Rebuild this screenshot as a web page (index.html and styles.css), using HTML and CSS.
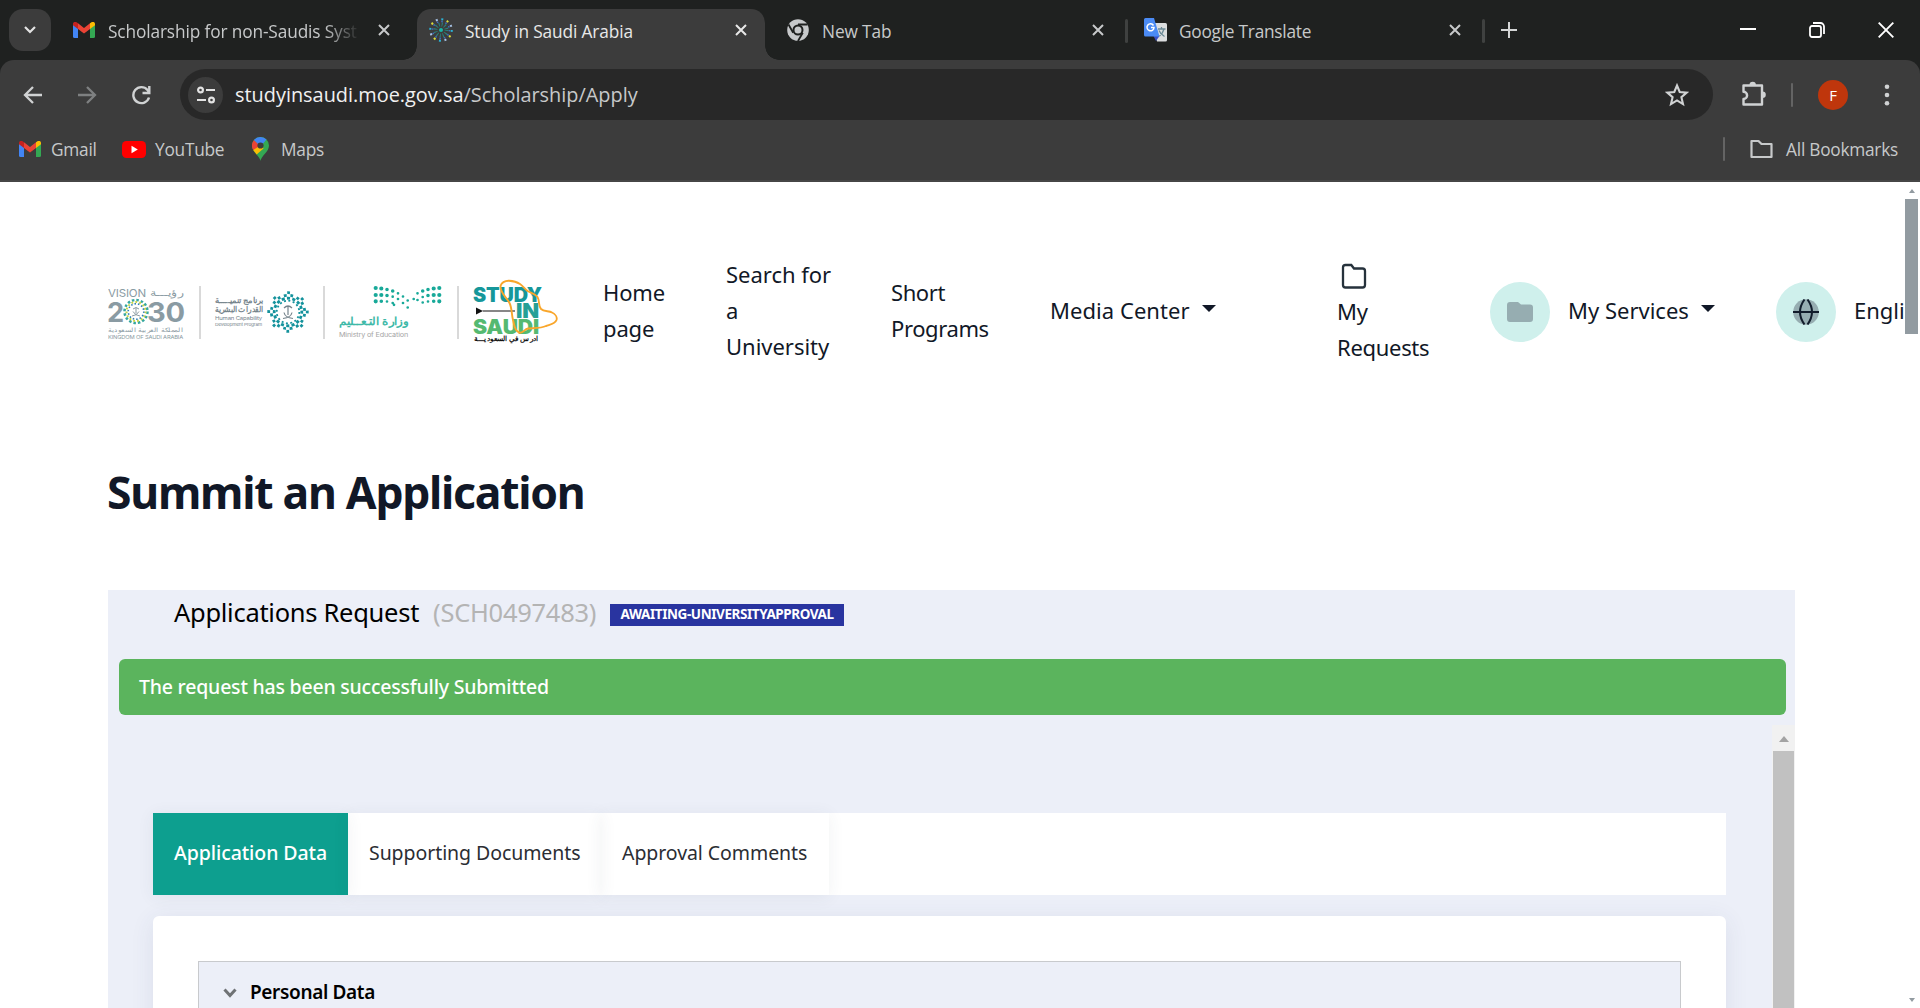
FILE: index.html
```html
<!DOCTYPE html>
<html lang="en">
<head>
<meta charset="utf-8">
<title>Study in Saudi Arabia</title>
<link rel="stylesheet" href="styles.css">
</head>
<body>
<svg width="0" height="0" class="defs">
  <defs>
    <symbol id="gmail" viewBox="0 0 22 16">
      <path fill="#4285f4" d="M0 2.5V14.500a1.500 1.500 0 0 0 1.500 1.500H5V6z"/>
      <path fill="#34a853" d="M22 2.500V14.500a1.500 1.500 0 0 1-1.500 1.500H17V6z"/>
      <path fill="#fbbc04" d="M17 1.200V7l5-3.700V2c0-2-2.200-2.700-3.600-1.700z"/>
      <path fill="#c5221f" d="M5 1.200V7L0 3.300V2C0 0 2.200-.7 3.600.3z"/>
      <path fill="#ea4335" d="M5 7V1.300l6 4.600 6-4.600V7l-6 4.600z"/>
    </symbol>
    <symbol id="close" viewBox="0 0 12 12"><path d="M1 1l10 10M11 1L1 11" stroke="currentColor" stroke-width="2" fill="none"/></symbol>
    <symbol id="folder" viewBox="0 0 24 20"><path d="M2 2h7l3 3h10v13H2z" fill="none" stroke="currentColor" stroke-width="2.200" stroke-linejoin="round"/></symbol>
  </defs>
</svg>

<div class="chrome">
  <div class="tabstrip">
    <div class="tab-search"><svg width="12" height="8" viewBox="0 0 12 8"><path d="M1 1l5 5 5-5" fill="none" stroke="#e3e3e3" stroke-width="2.200"/></svg></div>
    <div class="tab tab-mail"><svg class="fav" width="22" height="16"><use href="#gmail"/></svg><span class="tab-title fade">Scholarship for non-Saudis Syst</span><svg class="x" width="12" height="12"><use href="#close"/></svg></div>
    <div class="tab tab-active">
      <svg class="fav" width="24" height="24" viewBox="-12 -12 24 24" fill="none">
        <circle r="2" fill="#18b5a4"/>
        <circle r="5.500" stroke="#2a7f7a" stroke-width="4" stroke-dasharray="1 1.880"/>
        <circle r="8.500" stroke="#3f6fc0" stroke-width="1.600" stroke-dasharray="1.500 2.950"/>
        <circle r="10.800" stroke="#2bb3d6" stroke-width="2" stroke-dasharray="2 14.960"/>
        <circle r="10.800" stroke="#d9dc3c" stroke-width="2" stroke-dasharray="2 14.960" stroke-dashoffset="-5.650"/>
        <circle r="10.800" stroke="#a9c5e8" stroke-width="2" stroke-dasharray="2 14.960" stroke-dashoffset="-11.300"/>
      </svg>
      <span class="tab-title">Study in Saudi Arabia</span><svg class="x" width="12" height="12"><use href="#close"/></svg>
    </div>
    <div class="tab tab-new">
      <svg class="fav" width="22" height="22" viewBox="-11 -11 22 22"><circle r="10.800" fill="#c7c9cb"/><circle r="4.500" fill="#c7c9cb" stroke="#1f2120" stroke-width="2"/><path d="M0-5.500H9.500M4.800 2.700L0 11M-4.800 2.700L-9.500-5.500" stroke="#1f2120" stroke-width="1.800"/></svg>
      <span class="tab-title">New Tab</span><svg class="x" width="12" height="12"><use href="#close"/></svg>
    </div>
    <div class="tab tab-translate">
      <svg class="fav" width="23" height="24" viewBox="0 0 23 24"><path fill="#dcdedf" d="M9 5h12.500a1.500 1.500 0 0 1 1.500 1.500V22a1.500 1.500 0 0 1-1.500 1.500H13z"/><path fill="#3b50c5" d="M9.500 18h6L12 23z"/><path fill="#4b8bf5" d="M1.500 0H10l5.500 18.500h-14A1.500 1.500 0 0 1 0 17V1.500A1.500 1.500 0 0 1 1.500 0z"/><path d="M9.500 7.500A3.500 3.500 0 1 0 10 9.500H7" fill="none" stroke="#fff" stroke-width="1.500"/><path d="M14 11h7.500M17.500 9v2M20 11c-.8 3-2.500 5.500-4.500 7M15 12.500c1 2.500 3 4.500 5.500 6" fill="none" stroke="#6b8a96" stroke-width="1.300"/></svg>
      <span class="tab-title">Google Translate</span><svg class="x" width="12" height="12"><use href="#close"/></svg>
    </div>
    <div class="window-area">
      <svg width="16" height="16" viewBox="0 0 16 16"><path d="M8 0v16M0 8h16" stroke="#d4d6d6" stroke-width="2"/></svg>
      <div class="window-buttons">
        <svg width="16" height="16" viewBox="0 0 16 16"><path d="M0 7h16" stroke="#fff" stroke-width="2"/></svg>
        <svg width="16" height="16" viewBox="0 0 16 16"><rect x="1" y="4" width="11" height="11" rx="2" fill="none" stroke="#fff" stroke-width="1.800"/><path d="M4 1h7.500A3.500 3.500 0 0 1 15 4.500V12" fill="none" stroke="#fff" stroke-width="1.800"/></svg>
        <svg width="16" height="16" viewBox="0 0 16 16"><path d="M.7.700l14.600 14.600M15.300.7L.7 15.300" stroke="#fff" stroke-width="1.900"/></svg>
      </div>
    </div>
  </div>

  <div class="toolbar">
    <div class="nav-buttons">
      <svg width="20" height="20" viewBox="0 0 20 20"><path d="M19 10H2.500M10 2l-8 8 8 8" fill="none" stroke="#d0d2d3" stroke-width="2.300"/></svg>
      <svg width="20" height="20" viewBox="0 0 20 20"><path d="M1 10h16.500M10 2l8 8-8 8" fill="none" stroke="#7e8081" stroke-width="2.300"/></svg>
      <svg width="20" height="20" viewBox="0 0 20 20"><path d="M18 12.500A8 8 0 1 1 16.500 5l1.500 2.500" fill="none" stroke="#d0d2d3" stroke-width="2.400"/><path d="M18.300 1v7H11.500" stroke="#d0d2d3" stroke-width="2.400" fill="none"/></svg>
    </div>
    <div class="omnibox">
      <span class="site-info"><svg width="18" height="18" viewBox="0 0 18 18" fill="none" stroke="#e3e3e3" stroke-width="2.200"><circle cx="3.500" cy="4" r="2.400"/><path d="M9 4h9M0 14h9"/><circle cx="14.500" cy="14" r="2.400"/></svg></span>
      <span class="url"><b>studyinsaudi.moe.gov.sa</b>/Scholarship/Apply</span>
      <svg class="star" width="24" height="24" viewBox="0 0 24 24"><path d="M12 2.500l2.700 6.500 7 .6-5.300 4.600 1.600 6.900-6-3.700-6 3.700 1.600-6.900L2.300 9.600l7-.6z" fill="none" stroke="#d0d2d3" stroke-width="2.100"/></svg>
    </div>
    <svg class="puzzle" width="26" height="26" viewBox="0 0 26 26"><path d="M2.500 4.500h18.500v19H2.500V18a3.600 3.600 0 0 0 0-7.200z" fill="none" stroke="#d0d2d3" stroke-width="2.400" stroke-linejoin="round"/><path d="M8.500 4a3.200 3.200 0 0 1 6.400 0zM21.500 10.500a3.300 3.300 0 0 1 0 6.600z" fill="#d0d2d3"/></svg>
    <span class="bar"></span>
    <span class="avatar">F</span>
    <svg class="dots" width="6" height="22" viewBox="0 0 6 22" fill="#d0d2d3"><circle cx="3" cy="2.700" r="2.300"/><circle cx="3" cy="11" r="2.300"/><circle cx="3" cy="19.300" r="2.300"/></svg>
  </div>

  <div class="bookmarks">
    <svg width="22" height="16"><use href="#gmail"/></svg><span class="bm-gmail">Gmail</span>
    <svg width="24" height="17" viewBox="0 0 24 17"><rect width="24" height="17" rx="4.500" fill="#f00"/><path d="M9.500 4.800v7.400l6.300-3.700z" fill="#fff"/></svg><span class="bm-youtube">YouTube</span>
    <svg width="17" height="24" viewBox="0 0 17 24"><path fill="#34a853" d="M8.500 24C8 19 0 15 0 8.500a8.500 8.500 0 0 1 17 0C17 15 9 19 8.500 24z"/><path fill="#fbbc04" d="M1.200 13L8 5l3.500 6.500L4.600 17.500z"/><path fill="#ea4335" d="M2 3L8.500 8.500 1.200 13A9 9 0 0 1 2 3z"/><path fill="#4285f4" d="M2 3a8.500 8.500 0 0 1 12.500-.5L8.500 9.500z"/><circle cx="8.500" cy="8.500" r="3.100" fill="#3c3c3c"/></svg><span class="bm-maps">Maps</span>
    <span class="all-bookmarks"><i class="bar"></i><svg width="25" height="20"><use href="#folder"/></svg><span>All Bookmarks</span></span>
  </div>
</div>

<div class="viewport">
  <div class="page">
    <header class="site-header">
      <svg class="logos" width="456" height="72" viewBox="108 276 456 72">
        <g fill="#8a9ba3" font-family="Inter, 'Liberation Sans', sans-serif">
          <text x="108" y="297" font-size="10.500" textLength="38" lengthAdjust="spacingAndGlyphs">VISION</text>
          <text x="150" y="295.500" font-size="10" textLength="34" lengthAdjust="spacingAndGlyphs">رؤيـــة</text>
          <g font-size="27" font-weight="700"><text x="107" y="322" textLength="17" lengthAdjust="spacingAndGlyphs">2</text><text x="147" y="322" textLength="38" lengthAdjust="spacingAndGlyphs">30</text></g>
          <text x="108" y="331.500" font-size="6" textLength="75" lengthAdjust="spacingAndGlyphs">المملكة العربية السعودية</text>
          <text x="108" y="338.500" font-size="5" textLength="75" lengthAdjust="spacingAndGlyphs">KINGDOM OF SAUDI ARABIA</text>
        </g>
        <g fill="none" transform="translate(136 311.500)">
          <circle r="11.500" stroke="#35a7a0" stroke-width="2.500" stroke-dasharray="2.500 2.016"/>
          <circle r="9.500" stroke="#c8d645" stroke-width="2" stroke-dasharray="1.800 2.179"/>
          <circle r="7.800" stroke="#2d7fb5" stroke-width="1.600" stroke-dasharray="1.500 2"/>
          <path d="M0-3.500V2M-3-2.500q3-3 6 0M-4 4.500Q1 4 3 0M4 4.500Q-1 4-3 0" stroke="#8a9ba3"/>
        </g>
        <path d="M200 286v53M324 286v53M458 286v53" stroke="#cdcdcd" stroke-width="1.500"/>
        <g fill="#75848c" font-family="Inter, 'Liberation Sans', sans-serif">
          <text x="215" y="303" font-size="7.500" font-weight="700" textLength="48" lengthAdjust="spacingAndGlyphs">برنامج تنميـــــة</text>
          <text x="215" y="312" font-size="7.500" font-weight="700" textLength="48" lengthAdjust="spacingAndGlyphs">القدرات البشرية</text>
          <text x="215" y="320" font-size="5" textLength="47" lengthAdjust="spacingAndGlyphs">Human Capability</text>
          <text x="215" y="325.500" font-size="4" textLength="47" lengthAdjust="spacingAndGlyphs">Development Program</text>
        </g>
        <g fill="none" stroke="#14929c" transform="translate(288 312)">
          <circle r="19.300" stroke-width="2.800" stroke-dasharray="2.800 12.360" transform="rotate(-4)"/>
          <circle r="16.700" stroke-width="2.800" stroke-dasharray="2.800 3.758" transform="rotate(6.500)"/>
          <circle r="13.800" stroke-width="2.800" stroke-dasharray="3.100 2.319" transform="rotate(-6)"/>
          <circle r="11.300" stroke-width="1.800" stroke-dasharray="2 2.437"/>
        </g>
        <path d="M288 306v9M284 308q4-4 8 0M283 318.500q8-1 9-6M293 318.500q-8-1-9-6" fill="none" stroke="#75848c" stroke-width="1.200"/>
        <g fill="none" stroke="#18a999" stroke-linecap="round">
          <path stroke-width="4.200" d="M375.700 288h0M381.300 288.500h0M375.700 295h0M381.300 295h0M375.700 301.300h0M439.300 288h0M433.700 288.500h0M439.300 295h0M433.700 295h0M439.300 301.300h0"/>
          <path stroke-width="3.600" d="M387 289.500h0M392.700 291h0M387 295.500h0M381.300 301.300h0M428 289.500h0M422.700 291h0M428 295.500h0M433.700 301.300h0"/>
          <path stroke-width="2.700" d="M398 293.300h0M403 296.500h0M407.700 300.500h0M407.700 307.500h0M403 303h0M398 299h0M392.700 296.700h0M387 301.500h0M392.700 303h0M394 304.800h0M417.500 293.300h0M413.700 299h0M417.500 300h0M422.700 297h0M428 301.500h0M422.700 302.500h0"/>
        </g>
        <text x="339" y="325" font-size="11" font-weight="700" fill="#3fb9a8" textLength="69" lengthAdjust="spacingAndGlyphs">وزارة التـعــليم</text>
        <text x="339" y="337" font-size="6.500" fill="#a5a5a5" font-family="Inter, sans-serif" textLength="69" lengthAdjust="spacingAndGlyphs">Ministry of Education</text>
        <g font-family="Inter, 'Liberation Sans', sans-serif" font-weight="900" font-size="19.500">
          <text x="473" y="302" fill="#16979a" textLength="69" lengthAdjust="spacingAndGlyphs">STUDY</text>
          <text x="516" y="318" fill="#26a096" textLength="23" lengthAdjust="spacingAndGlyphs">IN</text>
          <text x="473" y="334" fill="#55b971" textLength="66" lengthAdjust="spacingAndGlyphs">SAUDI</text>
        </g>
        <path d="M476 307.500v7l7-3.500zM482 310.500h33v1h-33z" fill="#111"/>
        <path d="M500.500 286C501 283 505 280.500 509 280.700C514 281 517 282 520 284C523 286 525 289 527.500 291C531 293 535 293.500 537.500 297C540 301 538 306 541 309C544 312 549 310.500 552 312.500C555 314 557.500 317 556.500 320C555 324 550 324.500 546 326C541 328.500 533 328 528 328.500C524 329 523 334 519 332.500C514 330 514.500 325 513 320C511.500 314 512 308 509.500 303C507 298 500 293 500.500 286z" fill="none" stroke="#f9a62b" stroke-width="1.900"/>
        <text x="474" y="340.500" font-size="6.500" font-weight="700" fill="#111" textLength="64" lengthAdjust="spacingAndGlyphs">ادرس في السعوديـــة</text>
      </svg>
      <a class="nav-home">Home page</a>
      <a class="nav-search">Search for a University</a>
      <a class="nav-short">Short Programs</a>
      <a class="nav-media">Media Center<i class="caret"></i></a>
      <a class="nav-requests"><svg width="26" height="26" viewBox="0 0 26 26"><path d="M2 4.500A2.500 2.500 0 0 1 4.500 2h5.800l2.700 3.500h8.500A2.500 2.500 0 0 1 24 8v14a2.500 2.500 0 0 1-2.500 2.500h-17A2.500 2.500 0 0 1 2 22z" fill="none" stroke="#26323c" stroke-width="2.300"/></svg>My Requests</a>
      <a class="nav-round"><span class="disc"><svg width="26" height="20" viewBox="0 0 26 20"><path fill="#96adb1" d="M3 0h8l3 2.500h9a3 3 0 0 1 3 3V17a3 3 0 0 1-3 3H3a3 3 0 0 1-3-3V3a3 3 0 0 1 3-3z"/></svg></span><span class="label">My Services</span><i class="caret"></i></a>
      <a class="nav-round"><span class="disc"><svg width="26" height="26" viewBox="0 0 26 26"><circle cx="13" cy="13" r="12.800" fill="#96adb1"/><path d="M0 13h26M11.500.5q-9 12.500 0 25M14.500.5q9 12.500 0 25" fill="none" stroke="#111c2b" stroke-width="2"/></svg></span><span class="label">English</span></a>
    </header>

    <main>
      <h1>Summit an Application</h1>
      <section class="panel">
        <div class="panel-head"><span>Applications Request</span><span class="req-no">(SCH0497483)</span><span class="badge">AWAITING-UNIVERSITYAPPROVAL</span></div>
        <div class="alert">The request has been successfully Submitted</div>
        <div class="scroll-area">
          <div class="scroll-content">
            <div class="tabs"><a class="on">Application Data</a><a class="docs">Supporting Documents</a><a class="comments">Approval Comments</a></div>
            <div class="card">
              <div class="accordion"><svg width="14" height="10" viewBox="0 0 14 10"><path d="M1.500 1.500L7 7.500l5.500-6" fill="none" stroke="#6f7275" stroke-width="3"/></svg>Personal Data</div>
            </div>
          </div>
          <div class="inner-scrollbar"><i class="up"></i><div class="thumb"></div></div>
        </div>
      </section>
    </main>
  </div>
  <div class="page-scrollbar"><i class="up"></i><div class="thumb"></div><i class="down"></i></div>
</div>
</body>
</html>
```
FILE: styles.css
```css
* { box-sizing: border-box; }
body { margin: 0; width: 1920px; height: 1008px; overflow: hidden; display: flex; flex-direction: column; background: #fff; font-family: "Noto Sans", sans-serif; color: #111827; }
svg { display: block; flex: none; }
.defs { display: none; }

/* Browser frame */
.chrome { height: 182px; flex: none; background: #1f2120; font: 17.3px/24px "Open Sans", sans-serif; letter-spacing: -.13px; color: #c7c9ca; }
.tabstrip { height: 60px; display: grid; grid-template-columns: 60px 357px 348px 361px 357px 1fr; }
.tab-search { width: 42px; height: 42px; margin: 9px; border-radius: 14px; background: #3c3c3c; display: flex; align-items: center; justify-content: center; }
.tab { position: relative; display: flex; align-items: center; white-space: nowrap; }
.tab-title { padding-top: 3px; }
.tab .x { margin-left: auto; }
.tab-mail { padding: 0 27px 0 13px; }
.tab-mail .tab-title { margin-left: 13px; width: 252px; overflow: hidden; }
.fade { -webkit-mask-image: linear-gradient(90deg, #000 86%, transparent); mask-image: linear-gradient(90deg, #000 86%, transparent); }
.tab-active { margin-top: 9px; padding: 0 18px 9px 12px; background: #3c3c3c; border-radius: 14px 14px 0 0; color: #e8e8e8; }
.tab-active::before, .tab-active::after { content: ""; position: absolute; bottom: 0; width: 14px; height: 14px; }
.tab-active::before { left: -14px; background: radial-gradient(circle at 0 0, transparent 13.5px, #3c3c3c 14px); }
.tab-active::after { right: -14px; background: radial-gradient(circle at 100% 0, transparent 13.5px, #3c3c3c 14px); }
.tab-active .tab-title { margin-left: 12px; }
.tab-new { padding: 0 22px; }
.tab-new .tab-title { margin-left: 13px; }
.tab-translate { padding: 0 22px 0 18px; }
.tab-translate .tab-title { margin-left: 12px; letter-spacing: -.25px; }
.tab-new::after, .tab-translate::after { content: ""; position: absolute; right: -2px; top: 19px; width: 3px; height: 24px; border-radius: 2px; background: #3f4140; }
.window-area { display: flex; align-items: center; padding: 0 26px 0 18px; }
.window-buttons { margin-left: auto; display: flex; gap: 53px; }

.toolbar { height: 70px; padding: 0 30px 0 23px; background: #3c3c3c; border-radius: 14px 14px 0 0; display: flex; align-items: center; }
.nav-buttons { display: flex; gap: 34px; width: 157px; }
.omnibox { width: 1533px; height: 51px; margin-top: -1px; border-radius: 26px; background: #282828; display: flex; align-items: center; padding: 0 24px 0 8px; font-size: 19.9px; letter-spacing: 0; }
.site-info { width: 35px; height: 36px; border-radius: 50%; background: #3c3c3c; display: flex; align-items: center; justify-content: center; }
.url { margin-left: 12px; }
.url b { font-weight: 400; color: #f1f1f1; }
.star { margin-left: auto; }
.puzzle { margin: -2px 0 0 28px; }
.bar { width: 2px; height: 24px; border-radius: 2px; background: #646464; }
.toolbar .bar { margin-left: 24px; }
.avatar { width: 30px; height: 30px; margin-left: 25px; border-radius: 50%; background: #bf360c; color: #fff; font-size: 15px; line-height: 30px; text-align: center; }
.dots { margin-left: auto; }
.bookmarks { height: 52px; padding: 0 22px 12px 19px; background: #3c3c3c; border-bottom: 2px solid #464646; display: flex; align-items: center; letter-spacing: -.25px; }
.bookmarks span { padding-top: 1px; }
.bookmarks .bm-gmail { margin-left: 10px; width: 71px; }
.bookmarks .bm-youtube { margin-left: 9px; width: 97px; }
.bookmarks .bm-maps { margin-left: 12px; }
.bookmarks .all-bookmarks { margin-left: auto; padding: 0; display: flex; align-items: center; }
.all-bookmarks svg { margin: 0 12px 0 24px; }

/* Site */
.viewport { flex: 1; min-height: 0; display: flex; }
.page { width: 1905px; overflow: hidden; }
.site-header { height: 256px; padding-left: 108px; display: grid; grid-template-columns: 495px 123px 165px 159px 287px 153px 286px 1fr; align-items: center; font-size: 22px; line-height: 36px; letter-spacing: -.15px; }
.logos { margin-top: 4px; }
.nav-home { width: 70px; }
.nav-search { width: 110px; letter-spacing: -.02px; }
.nav-short { width: 105px; letter-spacing: -.4px; }
.nav-media { display: flex; align-items: center; letter-spacing: .05px; }
.nav-requests { width: 100px; padding-top: 2px; letter-spacing: -.3px; }
.nav-requests svg { margin: 5px 0 4px 4px; }
.nav-round { display: flex; align-items: center; white-space: nowrap; padding-top: 3px; }
.nav-round .label { margin-top: -4px; letter-spacing: 0; }
.disc { width: 60px; height: 60px; margin-right: 18px; flex: none; border-radius: 50%; background: #cff0ec; display: flex; align-items: center; justify-content: center; }
.caret { margin-left: 12px; margin-bottom: 3px; border: 7px solid transparent; border-top-color: #111827; border-bottom: 0; }
.nav-round .caret { margin-bottom: 6px; }

h1 { margin: 24px 0 68px 107px; font-size: 44.5px; line-height: 60px; font-weight: 700; letter-spacing: -1.27px; }
.panel { width: 1687px; height: 418px; margin-left: 108px; background: #eceff8; display: flex; flex-direction: column; }
.panel-head { height: 44px; padding-left: 66px; display: flex; align-items: center; font-size: 25.5px; letter-spacing: -.28px; color: #000; }
.req-no { margin-left: 14px; color: #b4b4b4; }
.badge { width: 234px; height: 22px; margin: 6px 0 0 14px; background: #2934a0; color: #fff; font-size: 13.5px; line-height: 21px; font-weight: 700; letter-spacing: -.42px; text-align: center; }
.alert { height: 56px; margin: 25px 9px 10px 11px; padding-left: 20px; border-radius: 6px; background: #5bb45d; color: #fff; font-size: 19.5px; line-height: 55px; font-weight: 500; letter-spacing: -.21px; }
.scroll-area { flex: 1; min-height: 0; display: flex; overflow: hidden; }
.scroll-content { flex: 1; padding: 88px 46px 0 45px; }
.tabs { height: 82px; display: flex; background: #fff; font-size: 19.5px; line-height: 79px; letter-spacing: -.07px; color: #2b2d33; }
.tabs a { padding-left: 21px; box-shadow: 0 2px 16px rgba(60, 70, 90, .07); }
.tabs .on { width: 195px; background: #0d9f8f; color: #fff; font-weight: 500; }
.tabs .docs { width: 253px; }
.tabs .comments { width: 228px; }
.card { height: 200px; margin-top: 21px; padding: 45px; border-radius: 6px; background: #fff; box-shadow: 0 4px 24px rgba(60, 70, 110, .09); }
.accordion { height: 140px; border: 1px solid #c8cacd; background: #eceff8; padding: 0 24px; line-height: 61px; display: flex; gap: 13px; color: #000; font-size: 19px; font-weight: 600; letter-spacing: -.35px; }
.accordion svg { margin-top: 26px; }
.inner-scrollbar { width: 23px; padding: 11px 1px 0; background: #f1f1f1; display: flex; flex-direction: column; align-items: center; }
.inner-scrollbar .thumb { width: 21px; flex: 1; margin-top: 9px; background: #c1c1c1; }
.up { border: 5.500px solid transparent; border-top: 0; border-bottom: 6px solid #a3a3a3; }
.page-scrollbar { width: 15px; padding: 7px 2px 6px 0; display: flex; flex-direction: column; align-items: center; }
.page-scrollbar .thumb { width: 13px; height: 135px; margin-top: 6px; background: #929ba1; }
.page-scrollbar .up { border-width: 0 3.500px 4px; border-bottom-color: #929ba1; }
.down { margin-top: auto; border: 3.500px solid transparent; border-top: 4px solid #929ba1; border-bottom: 0; }
```
